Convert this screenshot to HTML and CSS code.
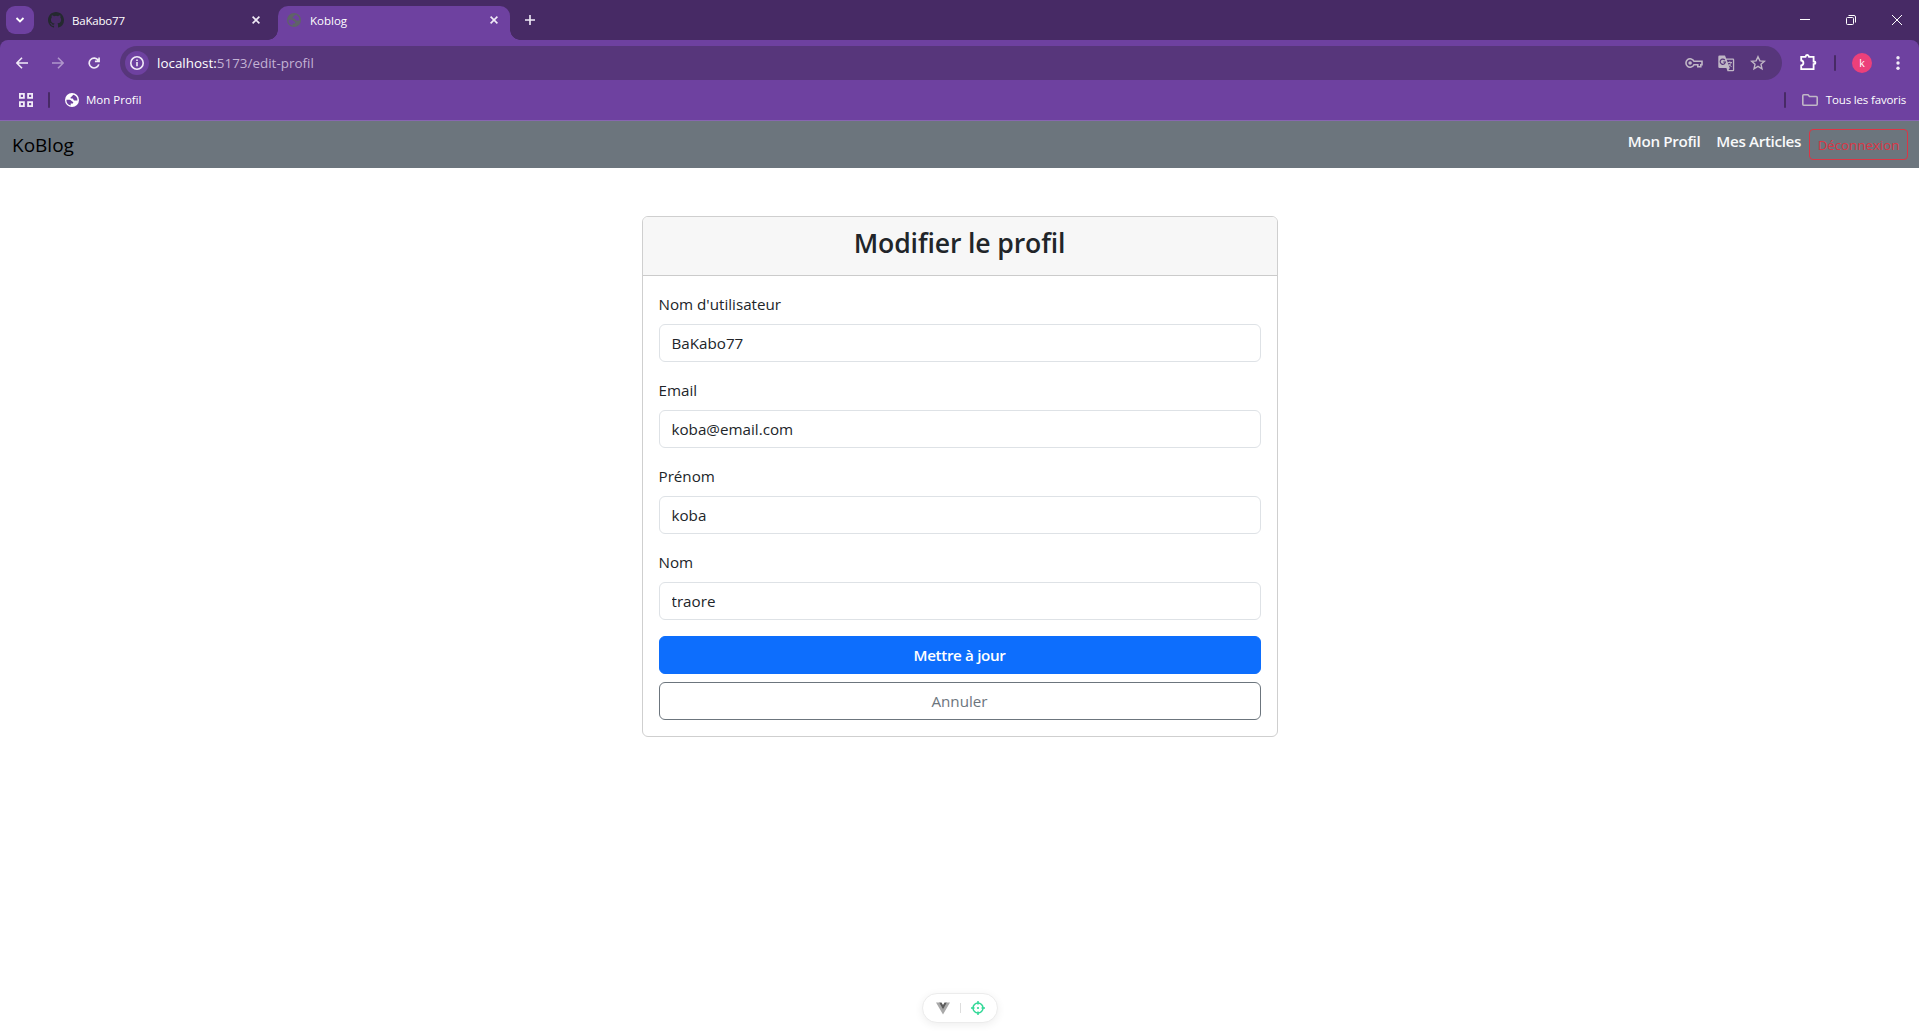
FILE: index.html
```html
<!DOCTYPE html>
<html lang="fr">
<head>
<meta charset="utf-8">
<title>Koblog</title>
<link rel="stylesheet" href="styles.css">
</head>
<body>
<svg class="defs" width="0" height="0">
  <symbol id="globe" viewBox="0 0 14 14">
    <circle cx="7" cy="7" r="7" fill="currentColor"/>
    <path class="water" d="M8.600 1.700C7.200 2 7.500 3.300 6.400 3.700 5.200 4 5.300 5.600 6.500 5.600 8 5.500 8.100 6 8.600 7 9.200 8 10.800 7.200 12.400 7.500A5.700 5.700 0 0 0 8.600 1.700Z"/>
    <path class="water" d="M1.400 6.800H4.500C6 6.800 6.200 8.200 7.300 8.400 8.800 8.700 8.500 10.600 7 10.600H5.700V12.500A5.600 5.600 0 0 1 1.400 6.800Z"/>
  </symbol>
</svg>
<header class="browser">
  <div class="tabstrip">
    <button class="tab-search"><svg width="10" height="8" viewBox="0 0 10 8"><path d="M1.500 2 5 5.500 8.500 2" class="line bold"/></svg></button>
    <div class="tab">
      <svg class="favicon github" width="16" height="16" viewBox="0 0 16 16"><path d="M8 0C3.580 0 0 3.580 0 8c0 3.540 2.290 6.530 5.470 7.590.4.070.55-.17.55-.38v-1.490c-2.010.37-2.530-.49-2.690-.94-.09-.23-.48-.94-.82-1.130-.28-.15-.68-.52-.01-.53.63-.01 1.080.58 1.230.82.72 1.210 1.870.87 2.330.66.070-.52.28-.87.51-1.070-1.780-.2-3.640-.89-3.640-3.950 0-.87.31-1.590.82-2.150-.08-.2-.36-1.020.08-2.120 0 0 .67-.21 2.200.82a7.500 7.500 0 0 1 4 0c1.530-1.040 2.200-.82 2.200-.82.44 1.100.16 1.920.08 2.120.51.56.82 1.270.82 2.150 0 3.070-1.870 3.750-3.650 3.950.29.25.54.73.54 1.480v2.200c0 .21.15.46.55.38A8 8 0 0 0 16 8c0-4.420-3.580-8-8-8Z"/></svg>
      <span class="tab-title">BaKabo77</span>
      <svg class="close" width="8" height="8" viewBox="0 0 8 8"><path d="m.6.6 6.800 6.800m0-6.800L.6 7.400" class="line"/></svg>
    </div>
    <div class="tab active">
      <svg class="favicon grey" width="14" height="14"><use href="#globe"/></svg>
      <span class="tab-title">Koblog</span>
      <svg class="close" width="8" height="8" viewBox="0 0 8 8"><path d="m.6.6 6.800 6.800m0-6.800L.6 7.400" class="line"/></svg>
    </div>
    <svg class="new-tab" width="10" height="10" viewBox="0 0 10 10"><path d="M5 0v10M0 5h10" class="line"/></svg>
    <div class="window-buttons">
      <svg width="10" height="10" viewBox="0 0 10 10"><path d="M0 4.500h10" class="line thin"/></svg>
      <svg width="10" height="10" viewBox="0 0 10 10"><rect x=".5" y="2.500" width="7" height="7" rx="1" class="line thin"/><path d="M2.500.5H8Q9.500.5 9.500 2v5.500" class="line thin"/></svg>
      <svg width="10" height="10" viewBox="0 0 10 10"><path d="m0 0 10 10M10 0 0 10" class="line thin"/></svg>
    </div>
  </div>
  <div class="toolbar">
    <div class="nav-icons">
      <svg width="12" height="12" viewBox="0 0 12 12"><path d="M12 6H1M6 .7.800 6 6 11.300" class="line"/></svg>
      <svg class="dim" width="12" height="12" viewBox="0 0 12 12"><path d="M0 6h11M6 .7 11.200 6 6 11.300" class="line"/></svg>
      <svg width="12" height="12" viewBox="0 0 13 13"><path d="M11 3.600A5.300 5.300 0 1 0 11.700 8M12 0.500v4.300H7.500" class="line bold"/></svg>
    </div>
    <div class="omnibox">
      <span class="site-info"><svg width="14" height="14" viewBox="0 0 14 14"><circle cx="7" cy="7" r="6.200" class="line"/><path d="M7 6v4.300M7 3.400v1.500" class="line"/></svg></span>
      <span class="url"><b>localhost:</b>5173/edit-profil</span>
      <div class="omni-icons">
        <svg width="18" height="10" viewBox="0 0 18 10"><path d="M9 3.300h8v3.400h-1.200v2h-3v-2H9a4.200 4.200 0 1 1 0-3.400Z" class="line"/><circle cx="5.100" cy="5" r="1.800" fill="currentColor"/></svg>
        <svg width="17" height="17" viewBox="0 0 17 17"><path d="M1.500.5H7l1.200 3H15q1.200 0 1.200 1.200V15q0 1.200-1.200 1.200H9.500L8.400 13H1.500Q.3 13 .3 11.800V1.700Q.3.500 1.500.5Z" fill="currentColor"/><path d="M8.700 4.800h6.200v10.100h-4.400l1.300-2Z" class="omni-fill"/><path d="M6.800 5A2.600 2.600 0 1 0 7.400 7H5.200" class="omni-line"/><path d="M9.500 7.500H14M11.800 6.300v1.200M13.300 7.500q-.6 2.400-3 3.800M10.800 9l2.800 3" class="line fine"/></svg>
        <svg width="16" height="16" viewBox="0 0 16 16"><path d="m8 1.700 1.900 4.200 4.500.4-3.400 3 1 4.500L8 11.400l-4 2.400 1-4.500-3.400-3 4.500-.4Z" class="line mid"/></svg>
      </div>
    </div>
    <svg class="extensions" width="17" height="17" viewBox="0 0 17 17"><path d="M1.200 2.800H5.500Q6 1 7.300 1T9 2.800h4.600v4.700q1.800 0 1.800 1.300t-1.800 1.300v5.100H1.200v-3.700q2.200-.3 2.200-2.500T1.200 6.500Z" class="line bold"/></svg>
    <i class="separator"></i>
    <span class="avatar">k</span>
    <svg class="menu" width="4" height="14" viewBox="0 0 4 14"><g fill="currentColor"><circle cx="2" cy="1.800" r="1.700"/><circle cx="2" cy="7" r="1.700"/><circle cx="2" cy="12.200" r="1.700"/></g></svg>
  </div>
  <div class="bookmarks">
    <svg class="apps" width="14" height="14" viewBox="0 0 14 14"><path d="M.9.900h4v4h-4ZM9.100.900h4v4h-4ZM.9 9.100h4v4h-4ZM9.100 9.100h4v4h-4Z" class="line bold"/></svg>
    <i class="separator"></i>
    <svg class="page-icon" width="14" height="14"><use href="#globe"/></svg>
    <span class="mark">Mon Profil</span>
    <i class="separator last"></i>
    <svg class="folder" width="16" height="12" viewBox="0 0 16 12"><path d="M1.700.8H6l1.500 1.700h6.800q.9 0 .9.900v6.900q0 .9-.9.900H1.700q-.9 0-.9-.9V1.700q0-.9.900-.9Z" class="line"/></svg>
    <span class="mark all">Tous les favoris</span>
  </div>
</header>

<nav class="navbar">
  <a class="brand">KoBlog</a>
  <a class="nav-link profile">Mon Profil</a>
  <a class="nav-link articles">Mes Articles</a>
  <button class="logout">Déconnexion</button>
</nav>

<main class="page">
  <section class="card">
    <div class="card-header"><h3>Modifier le profil</h3></div>
    <form class="card-body">
      <label for="username">Nom d'utilisateur</label>
      <input id="username" type="text" value="BaKabo77">
      <label for="email">Email</label>
      <input id="email" type="text" value="koba@email.com">
      <label for="firstname">Prénom</label>
      <input id="firstname" type="text" value="koba">
      <label for="lastname">Nom</label>
      <input id="lastname" type="text" value="traore">
      <button type="button" class="btn primary">Mettre à jour</button>
      <button type="button" class="btn secondary">Annuler</button>
    </form>
  </section>
</main>

<div class="devtools">
  <svg width="14" height="13" viewBox="0 0 14 13"><path d="M0 .5h3l4 6.800L11 .5h3L7 12.500Z" fill="#a9a9a9"/><path d="M3 .5h2.500L7 3 8.500.5H11L7 7.400Z" fill="#5c5c5c"/></svg>
  <i></i>
  <svg width="14" height="14" viewBox="0 0 14 14"><circle cx="7" cy="7" r="5" fill="none" stroke="#32d897" stroke-width="1.500"/><path d="M7 0v3.500M7 10.500V14M0 7h3.500M10.500 7H14" stroke="#32d897" stroke-width="1.500"/><circle cx="7" cy="7" r="1.100" fill="#32d897"/></svg>
</div>
</body>
</html>
```
FILE: styles.css
```css
* { box-sizing: border-box; }
body {
  margin: 0;
  height: 1031px;
  overflow: hidden;
  background: #fff;
  color: #212529;
  font: 15.200px/24px "Open Sans", "Noto Sans", sans-serif;
}
svg { display: block; flex: none; }
.defs { position: absolute; }
button, input { font: inherit; }

.line { fill: none; stroke: currentColor; stroke-width: 1.600; }
.line.bold { stroke-width: 1.800; }
.line.mid { stroke-width: 1.400; }
.line.thin { stroke-width: 1; }
.line.fine { stroke-width: .9; }

/* Browser window */
.browser { height: 121px; background: #6e41a0; border-bottom: 1px solid #8865b1; color: #f1ebf7; }
.tabstrip { display: flex; align-items: center; height: 40px; padding: 0 12px 0 6px; background: #472a65; }
.tab-search {
  display: grid; place-items: center; width: 28px; height: 28px; margin: 0 6px 0 0;
  padding: 0; border: 0; border-radius: 9px; background: #6e41a0; color: #fff;
}
.tab { display: flex; align-items: center; width: 238px; height: 34px; margin-top: 6px; padding: 0 18px 6px 8px; }
.tab .close { margin-left: auto; }
.tab.active { position: relative; width: 232px; padding: 0 12px 6px 9px; border-radius: 10px 10px 0 0; background: #6e41a0; }
.tab.active::before, .tab.active::after { content: ""; position: absolute; bottom: 0; width: 10px; height: 10px; }
.tab.active::before { left: -10px; background: radial-gradient(circle at 0 0, transparent 9.500px, #6e41a0 10px); }
.tab.active::after { right: -10px; background: radial-gradient(circle at 100% 0, transparent 9.500px, #6e41a0 10px); }
.github { fill: #24292f; }
.grey { color: #5f6368; }
.water { fill: #6e41a0; }
.tab-title { margin-left: 8px; padding-top: 1px; font-size: 11.500px; line-height: 16px; color: #fff; letter-spacing: -.2px; }
.active .tab-title { margin-left: 9px; letter-spacing: 0; }
.new-tab { margin-left: 15px; }
.window-buttons { display: flex; gap: 36px; margin-left: auto; padding-right: 5px; color: #fff; }

.toolbar { display: flex; align-items: center; height: 46px; padding: 0 20px 0 16px; border-radius: 8px 8px 0 0; background: #6e41a0; box-shadow: 0 -8px 0 0 #472a65; }
.tabstrip { position: relative; }
.nav-icons { display: flex; align-items: center; gap: 24px; width: 104px; }
.dim { opacity: .5; }
.omnibox { display: flex; align-items: center; flex: none; width: 1662px; height: 34px; padding: 0 16px 0 5px; border-radius: 17px; background: #57367b; }
.site-info { display: grid; place-items: center; width: 24px; height: 24px; border-radius: 50%; background: #6e41a0; }
.url { margin-left: 8px; font-size: 13.400px; color: #c3b2d4; letter-spacing: .02px; }
.url b { font-weight: 400; color: #fff; }
.omni-icons { display: flex; align-items: center; gap: 15px; margin-left: auto; color: #c0b7c6; }
.omni-fill { fill: #57367b; }
.omni-line { fill: none; stroke: #57367b; stroke-width: 1.200; }
.extensions { margin-left: 18px; margin-bottom: 1px; color: #fff; }
.separator { flex: none; width: 2px; height: 16px; border-radius: 1px; background: #472a65; }
.toolbar .separator { margin-left: 17px; }
.avatar { flex: none; width: 20px; height: 20px; margin-left: 16px; border-radius: 50%; background: #ec407a; color: #fff; font-size: 10.500px; line-height: 20px; text-align: center; }
.menu { margin-left: auto; margin-right: -1px; }

.bookmarks { display: flex; align-items: center; height: 28px; padding: 0 13px 0 19px; }
.bookmarks .separator { margin-left: 15px; }
.page-icon { margin-left: 15px; color: #fff; }
.mark { margin-left: 7px; font-size: 11.500px; line-height: 16px; color: #fff; letter-spacing: 0; }
.bookmarks .separator.last { margin-left: auto; }
.folder { margin-left: 16px; color: #c0b7c6; }
.mark.all { margin-left: 8px; letter-spacing: -.15px; }

/* Site */
.navbar { display: flex; height: 47px; padding: 8px 11px 8px 12px; background: #6c757d; }
.brand { margin-right: auto; font-size: 19px; line-height: 33px; color: #000; }
.nav-link { font-weight: 600; letter-spacing: -.35px; color: #f8f9fa; line-height: 25px; }
.articles { margin: 0 8px 0 16px; }
.logout { width: 99px; height: 31px; padding: 0; border: 1px solid #dc3545; border-radius: 4px; background: none; color: #dc3545; font-size: 13.300px; line-height: 30px; }

.page { display: flex; justify-content: center; padding-top: 48px; }
.card { width: 636px; border: 1px solid #cfcfcf; border-radius: 6px; background: #fff; }
.card-header { padding: 9px 16px 15px; border-bottom: 1px solid #cbcbcb; border-radius: 5px 5px 0 0; background: #f7f7f7; text-align: center; }
h3 { margin: 0; font-size: 26.600px; font-weight: 600; letter-spacing: -.12px; line-height: 34px; }
.card-body { display: flex; flex-direction: column; padding: 16px; }
label { margin-bottom: 8px; }
input { width: 100%; height: 38px; margin-bottom: 16px; padding: 5px 12px 6px; border: 1px solid #dee2e6; border-radius: 6px; background: #fff; color: #212529; }
.btn { height: 38px; padding: 0; border: 1px solid; border-radius: 6px; }
.primary { border-color: #0d6efd; background: #0d6efd; color: #fff; font-weight: 600; letter-spacing: -.35px; }
.secondary { margin-top: 8px; border-color: #6c757d; background: #fff; color: #6c757d; }

/* Floating developer panel */
.devtools {
  position: absolute; left: 922px; top: 993px; display: flex; align-items: center; justify-content: space-between;
  width: 76px; height: 30px; padding: 0 12px 0 13px; border: 1px solid #ececec; border-radius: 15px; background: #fff;
  box-shadow: 0 2px 8px rgba(0, 0, 0, .07);
}
.devtools i { width: 1px; height: 10px; background: #ddd; }
```
